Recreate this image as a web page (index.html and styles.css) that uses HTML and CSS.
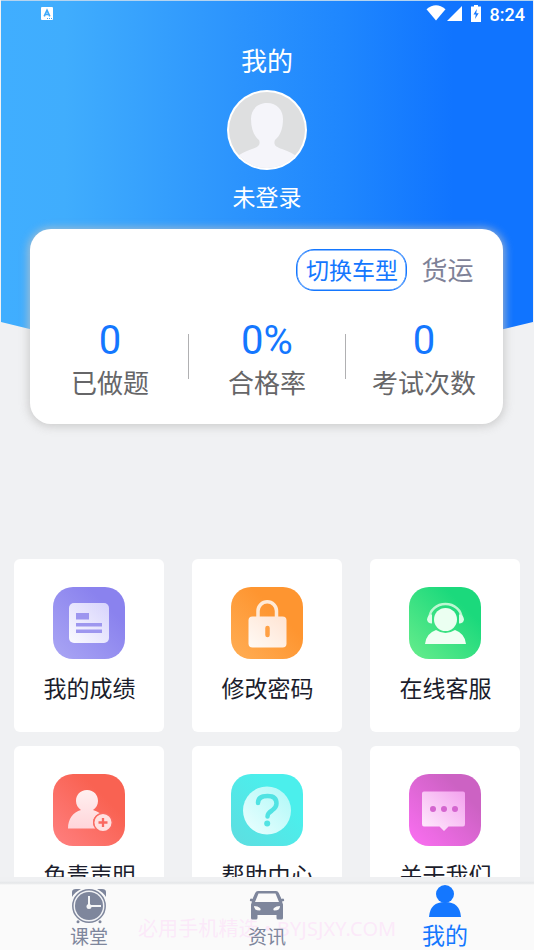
FILE: index.html
```html
<!DOCTYPE html>
<html lang="zh-CN">
<head>
<meta charset="utf-8">
<title>我的</title>
<link rel="stylesheet" href="styles.css">
</head>
<body>
<div class="screen">
  <main class="content">
    <div class="hero">
      <header class="status">
        <svg class="status-app" width="12" height="13" viewBox="0 0 12 13"><rect width="12" height="13" rx="1" fill="#fff"/><path d="M3.200 9.300 6 3.200 8.800 9.300M4.200 7.500h3.600" fill="none" stroke="#3faafa" stroke-width="1.700"/><path d="M6 11.500h1M8 11.500h1M10 11.500h1" stroke="#3faafa"/></svg>
        <div class="status-right">
          <svg width="20" height="16" viewBox="0 0 20 16"><path d="M.5 4.200Q10-3.500 19.500 4.200L10 15.500z" fill="#fff"/></svg>
          <svg class="signal" width="15" height="15" viewBox="0 0 15 15"><path d="M15 0v15H0z" fill="#fff"/></svg>
          <svg class="battery" width="10" height="17" viewBox="0 0 10 17"><path d="M3 0h4v1.500h3V17H0V1.500h3z" fill="#fff"/><path d="M5.800 4 2.500 9.500h2.300L4 14l3.700-5.700H5.300z" fill="#1477ff"/></svg>
          <span class="clock">8:24</span>
        </div>
      </header>
      <h1 class="title">我的</h1>
      <svg class="avatar" viewBox="0 0 80 80">
        <defs><clipPath id="face"><circle cx="40" cy="40" r="38"/></clipPath></defs>
        <circle cx="40" cy="40" r="40" fill="#fff"/>
        <g clip-path="url(#face)"><path d="M0 0h80v80H0z" fill="#dedfe0"/><path d="M40 13c-10 0-16 7-16 16 0 10 3 17 8 21 2 5-1 7-7 9C16 62 10 66 5 70v10h70V70c-5-4-11-8-20-11-6-2-9-4-7-9 5-4 8-11 8-21 0-9-6-16-16-16z" fill="#f5f5fa"/></g>
      </svg>
      <div class="login">未登录</div>
    </div>

    <section class="card">
      <div class="vehicle"><button class="switch">切换车型</button><span class="kind">货运</span></div>
      <div class="stats">
        <div class="stat"><b class="num">0</b><span class="label">已做题</span></div>
        <div class="stat"><b class="num">0%</b><span class="label">合格率</span></div>
        <div class="stat"><b class="num">0</b><span class="label">考试次数</span></div>
      </div>
    </section>

    <section class="tiles">
      <div class="tile">
        <svg class="icon" viewBox="0 0 72 72">
          <defs><linearGradient id="g1" x1="0" y1="1" x2="1" y2="0"><stop offset="0" stop-color="#aaa6f4"/><stop offset=".75" stop-color="#8a82ee"/></linearGradient><linearGradient id="w1" x1="0" y1="1" x2="1" y2="0"><stop offset="0" stop-color="#fafaff"/><stop offset="1" stop-color="#d7d3fc"/></linearGradient></defs>
          <rect width="72" height="72" rx="20" fill="url(#g1)"/><rect x="16" y="16" width="40" height="40" rx="5" fill="url(#w1)"/><path d="M23 26h13v6.500H23zM23 36h26v3.500H23zM23 42.500h26V46H23z" fill="#9d96ef"/>
        </svg>
        <span class="name">我的成绩</span>
      </div>
      <div class="tile">
        <svg class="icon" viewBox="0 0 72 72">
          <defs><linearGradient id="g2" x1="0" y1="1" x2="1" y2="0"><stop offset="0" stop-color="#ffae55"/><stop offset=".65" stop-color="#fe9530"/></linearGradient><linearGradient id="w2" x1="0" y1="1" x2="1" y2="0"><stop offset="0" stop-color="#fffaf5"/><stop offset="1" stop-color="#ffe4d3"/></linearGradient></defs>
          <rect width="72" height="72" rx="20" fill="url(#g2)"/><path d="M27 30v-6a9 9 0 0 1 18.500 0v6" fill="none" stroke="#ffe9d5" stroke-width="3.500"/><rect x="17.500" y="29.500" width="38" height="31" rx="4" fill="url(#w2)"/><path d="M36.500 41v7" stroke="#ffa044" stroke-width="4.500" stroke-linecap="round"/>
        </svg>
        <span class="name">修改密码</span>
      </div>
      <div class="tile">
        <svg class="icon" viewBox="0 0 72 72">
          <defs><linearGradient id="g3" x1="0" y1="1" x2="1" y2="0"><stop offset="0" stop-color="#68ed8c"/><stop offset=".75" stop-color="#1bd97c"/></linearGradient></defs>
          <rect width="72" height="72" rx="20" fill="url(#g3)"/><path d="M20.500 31a16 14 0 0 1 32 0" fill="none" stroke="#bdf8d2" stroke-width="2.500"/><path d="M23 27.500h-1.500q-3 1-3.500 5 .5 4 5 4zM50 27.500h1.500q3 1 3.500 5-.5 4-5 4z" fill="#ddfce8"/><circle cx="36.500" cy="32.500" r="11.500" fill="#ebfff1"/><path d="M16 57q1-10.500 11-14 9.500 6 19 0 10 3.500 11 14z" fill="#f0fff4"/>
        </svg>
        <span class="name">在线客服</span>
      </div>
      <div class="tile">
        <svg class="icon" viewBox="0 0 72 72">
          <defs><linearGradient id="g4" x1="0" y1="1" x2="1" y2="0"><stop offset="0" stop-color="#ff8080"/><stop offset=".7" stop-color="#f96252"/></linearGradient><linearGradient id="w4" x1="0" y1="0" x2="0" y2="1"><stop offset="0" stop-color="#fff0f0"/><stop offset="1" stop-color="#ffd5da"/></linearGradient></defs>
          <rect width="72" height="72" rx="20" fill="url(#g4)"/><path d="M34 16c-7 0-11 5-11 11 0 4 2 7 5 9-8 2-13 9-13 18.500h27.500a9 9 0 0 1 5-15Q44 37 40 36c3-2 5-5 5-9 0-6-4-11-11-11z" fill="url(#w4)"/><circle cx="50" cy="48.500" r="9.300" fill="#ffe0e0" stroke="#fa6c63" stroke-width="1.500"/><path d="M45.500 48.500h9M50 44v9" stroke="#fa6860" stroke-width="2.300"/>
        </svg>
        <span class="name">免责声明</span>
      </div>
      <div class="tile">
        <svg class="icon" viewBox="0 0 72 72">
          <defs><linearGradient id="g5" x1="0" y1="1" x2="1" y2="0"><stop offset="0" stop-color="#5fdde0"/><stop offset=".7" stop-color="#4befec"/></linearGradient><linearGradient id="w5" x1="0" y1="1" x2="1" y2="0"><stop offset="0" stop-color="#edffff"/><stop offset="1" stop-color="#adf8f7"/></linearGradient></defs>
          <rect width="72" height="72" rx="20" fill="url(#g5)"/><circle cx="36" cy="36.500" r="24" fill="url(#w5)"/><path d="M27 29q0-7 9.500-7 9 0 9 7.500 0 4-4.500 7-4.500 2.800-4.500 6" fill="none" stroke="#51e3e3" stroke-width="4.500" stroke-linecap="round"/><circle cx="36.200" cy="49.500" r="3" fill="#51e3e3"/>
        </svg>
        <span class="name">帮助中心</span>
      </div>
      <div class="tile">
        <svg class="icon" viewBox="0 0 72 72">
          <defs><linearGradient id="g6" x1="0" y1="1" x2="1" y2="0"><stop offset=".1" stop-color="#f56dec"/><stop offset=".75" stop-color="#cc62c3"/></linearGradient><linearGradient id="w6" x1="0" y1="1" x2="1" y2="0"><stop offset="0" stop-color="#ffedfd"/><stop offset="1" stop-color="#f3a1ee"/></linearGradient></defs>
          <rect width="72" height="72" rx="20" fill="url(#g6)"/><path d="M15 17.500h39q2 0 2 2V50q0 2.500-2 2.500H39.500L35 57l-4.500-4.500H15q-2 0-2-2.500V19.500q0-2 2-2z" fill="url(#w6)"/><g fill="#d465cf"><circle cx="24" cy="35" r="3"/><circle cx="35" cy="35" r="3"/><circle cx="46" cy="35" r="3"/></g>
        </svg>
        <span class="name">关于我们</span>
      </div>
    </section>
  </main>

  <nav class="tabs">
    <div class="watermark">必用手机精选 • BYJSJXY.COM</div>
    <div class="tab">
      <svg width="36" height="36" viewBox="0 0 36 36"><g fill="#7e869c"><path d="M1 9V4Q1 1 5 1h5Q4 4 1 9zM35 9V4q0-3-4-3h-5q6 3 9 8z"/><circle cx="7" cy="33.800" r="1.500"/><circle cx="29" cy="33.800" r="1.500"/></g><circle cx="18" cy="18" r="16.200" fill="#f2f3f6" stroke="#7e869c" stroke-width="1.500"/><circle cx="18" cy="18" r="14" fill="#7e869c"/><path d="M18 8v10h12" fill="none" stroke="#f5f6f8" stroke-width="2"/><circle cx="18" cy="18.500" r="2.500" fill="#f5f6f8"/></svg>
      <span class="tab-name">课堂</span>
    </div>
    <div class="tab">
      <svg width="36" height="36" viewBox="0 0 36 36"><path fill="#7e869c" fill-rule="evenodd" d="M9 3h18q2 0 2.800 2l2.700 6 1.500-.5q1.500.500 1 2.500l-2 .5 1 3V30q0 1.500-1.500 1.500H29q-1.500 0-1.500-1.500v-3H8.500v3q0 1.500-1.500 1.500H3.500Q2 31.500 2 30V16.500l1-3-2-.5Q.5 11 2 10.500l1.500.5 2.700-6q.8-2 2.800-2zM9.500 5.500 6 14h24L26.500 5.500zM5 18q0 4.500 5.500 4.500 2-.5.500-2.500Q9 18 5 18zm26 0q-4 0-6 2-1.500 2 .5 2.500 5.500 0 5.500-4.500z"/></svg>
      <span class="tab-name">资讯</span>
    </div>
    <div class="tab active">
      <svg width="36" height="36" viewBox="0 0 36 36"><g fill="#1477ff"><ellipse cx="18" cy="10" rx="9" ry="9"/><path d="M2 33Q3 18 18 18T34 33z"/></g></svg>
      <span class="tab-name">我的</span>
    </div>
  </nav>
</div>
</body>
</html>
```
FILE: styles.css
```css
* { box-sizing: border-box; }
body {
  margin: 0;
  font-family: Roboto, "Noto Sans CJK SC", sans-serif;
  background: #f0f1f3;
}
svg { display: block; flex: none; }
.screen {
  display: flex;
  flex-direction: column;
  width: 534px;
  height: 950px;
  overflow: hidden;
}
.content { flex: 1; min-height: 0; overflow: hidden; }
.hero {
  display: flex;
  flex-direction: column;
  align-items: center;
  height: 340px;
  margin: 0 1px;
  border-top: 1px solid #b5d4ef;
  background: linear-gradient(90deg, #40aeff 0%, #40adfd 12%, #2c94fd 44%, #1f87fe 64%, #1074ff 85%, #1074ff 100%);
  clip-path: polygon(0 0, 100% 0, 100% 322px, 90% 335px, 10% 335px, 0 322px);
}
.status {
  display: flex;
  justify-content: space-between;
  align-self: stretch;
  height: 42px;
  padding: 6px 8px 0 40px;
}
.status-right { display: flex; align-items: flex-start; margin-top: -2px; color: #fff; }
.signal { margin: 1px 0 0 1px; }
.battery { margin: 0 9px 0 9px; }
.clock { font-size: 18px; line-height: 19px; font-weight: 500; }
.title {
  margin: 0;
  font-size: 26px;
  line-height: 38px;
  font-weight: 400;
  color: #fff;
}
.avatar { width: 80px; height: 80px; margin-top: 9px; }
.login { margin-top: 12px; font-size: 23px; line-height: 34px; color: #fff; }
.card {
  position: relative;
  width: 473px;
  height: 195px;
  margin: -111px 0 0 30.400px;
  padding: 20px 30px 0 0;
  border-radius: 21px;
  background: #fff;
  box-shadow: 0 1px 9px 2px rgba(195, 195, 195, .75);
}
.vehicle { display: flex; justify-content: flex-end; align-items: center; gap: 14px; }
.switch {
  width: 111px;
  height: 42px;
  padding: 4px 0 0;
  border: 1px solid #1477ff;
  border-radius: 18px;
  background: none;
  font: inherit;
  font-size: 23px;
  line-height: 34px;
  color: #1477ff;
  box-shadow: inset 0 0 0 .5px #1477ff;
}
.kind { padding-top: 2px; font-size: 26px; line-height: 38px; color: #7e8298; }
.stats { display: grid; grid-template-columns: repeat(3, 157px); justify-content: center; margin: 26px -30px 0 0; }
.stat { position: relative; display: flex; flex-direction: column; align-items: center; }
.stat + .stat::before {
  content: "";
  position: absolute;
  left: -.5px;
  top: 17px;
  width: 1px;
  height: 45px;
  background: #b0b0b2;
}
.num { font-size: 40px; line-height: 48px; font-weight: 400; color: #1477ff; }
.label { font-size: 26px; line-height: 38px; color: #666668; }
.tiles {
  display: grid;
  grid-template-columns: repeat(3, 150px);
  gap: 14px 28px;
  margin: 135px 14px 0;
}
.tile {
  display: flex;
  flex-direction: column;
  align-items: center;
  height: 173px;
  padding-top: 28px;
  border-radius: 6px;
  background: #fff;
}
.icon { width: 72px; height: 72px; }
.name { margin: 14px 0 0 1px; font-size: 23px; line-height: 34px; color: #1b1d2c; }
.tabs {
  position: relative;
  display: flex;
  height: 73px;
  padding-top: 7px;
  background: linear-gradient(#eff0f2 0, #eff0f2 4px, #e4e6e8 6px, #fafafa 8px);
}
.tab {
  position: relative;
  display: flex;
  flex: 1;
  flex-direction: column;
  align-items: center;
  padding-top: 4px;
  color: #7e869c;
}
.tab-name { font-size: 19px; line-height: 28px; }
.active { padding-top: 0; color: #1477ff; }
.active .tab-name { font-size: 23px; line-height: 33px; }
.watermark {
  position: absolute;
  left: 138px;
  top: 39px;
  font: 20px/26px "Noto Sans", "Noto Sans CJK SC", sans-serif;
  letter-spacing: .1px;
  white-space: nowrap;
  color: rgba(255, 205, 249, .38);
}
```
